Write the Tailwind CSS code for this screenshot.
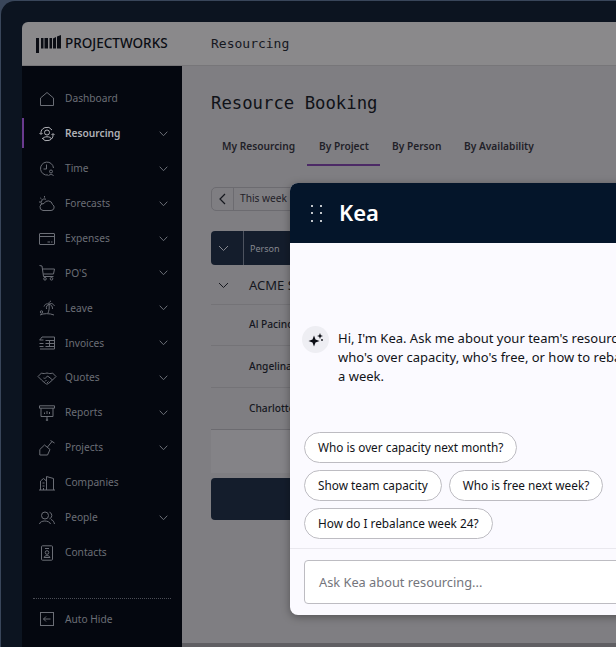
<!DOCTYPE html>
<html lang="en">
<head>
    <meta charset="UTF-8">
    <meta name="viewport" content="width=device-width, initial-scale=1.0">
    <title>Projectworks - Kea</title>
    <script src="https://cdn.jsdelivr.net/npm/@tailwindcss/browser@4"></script>
</head>
<body class="bg-[#39465a] font-['Noto_Sans',sans-serif]">
<div class="relative w-[616px] h-[647px] overflow-hidden">
    <!-- device frame -->
    <div class="absolute inset-0 ml-px mt-px rounded-tl-[14px] bg-[#0c1420] pl-[21px] pt-[21px]">
        <div class="flex flex-col w-[700px] h-[625px] rounded-tl-[6px] overflow-hidden">
            <header class="flex items-center h-[44px] shrink-0 bg-[#8a898b] border-b border-[#777679]">
                <div class="flex items-center w-[189px] pl-[14px] gap-[4px]">
                    <svg width="25" height="18" viewBox="0 0 25 18" fill="#0b0d14"><path d="M0 3h3v15H0zM5 3h2.500v10.500H5zM8.500 3H12v10.500H8.500zM13.500 3H16v10.500h-2.500zM17 3.500l3-1.500v11.500h-3zM21 1.500 25 0v13.500h-4z"/></svg>
                    <span class="text-[13.5px] leading-none font-medium text-[#0b0d14]">PROJECTWORKS</span>
                </div>
                <span class="font-['DejaVu_Sans_Mono',monospace] text-[13px] text-[#16181f]">Resourcing</span>
            </header>
            <div class="flex flex-1 min-h-0">
                <nav class="w-[160px] shrink-0 bg-[#04070f] pt-[15.5px] relative text-[10.2px] text-[#6b6e76]">
                    <div class="absolute left-0 top-[52px] w-[2px] h-[30px] bg-[#6a3a8e]"></div>
                    <div class="flex items-center h-[34.9px] pl-[17px] gap-[10px]">
                        <svg class="w-[16px] h-[16px]" viewBox="0 0 16 16" fill="none" stroke="currentColor"><path d="M1.500 7 8 1.500 14.500 7v7.500h-13z"/></svg><span>Dashboard</span>
                    </div>
                    <div class="flex items-center h-[34.9px] pl-[17px] gap-[10px] text-[#b0b1b6] font-semibold">
                        <svg class="w-[16px] h-[16px]" viewBox="0 0 16 16" fill="none" stroke="currentColor"><circle cx="8" cy="6.500" r="2.500"/><path d="M3.500 13c1-3 8-3 9 0M2 8a6 6 0 0 1 11-4M14 8a6 6 0 0 1-11 4M.5 7l1.500 1.500L3.500 7M12.500 9l1.500-1.500L15.500 9"/></svg><span class="flex-1">Resourcing</span>
                        <svg class="w-[9px] h-[6px] mr-[14px]" viewBox="0 0 9 6" fill="none" stroke="#6b6e76"><path d="m.7.7 3.800 4 3.800-4"/></svg>
                    </div>
                    <div class="flex items-center h-[34.9px] pl-[17px] gap-[10px]">
                        <svg class="w-[16px] h-[16px]" viewBox="0 0 16 16" fill="none" stroke="currentColor"><path d="M9 14A6.500 6.500 0 1 1 14.500 7M7.500 3.500V8H4.500"/><circle cx="12" cy="10.500" r="1.500"/><path d="M9.500 15c.5-2 4.500-2 5 0"/></svg><span class="flex-1">Time</span>
                        <svg class="w-[9px] h-[6px] mr-[14px]" viewBox="0 0 9 6" fill="none" stroke="currentColor"><path d="m.7.7 3.800 4 3.800-4"/></svg>
                    </div>
                    <div class="flex items-center h-[34.9px] pl-[17px] gap-[10px]">
                        <svg class="w-[16px] h-[16px]" viewBox="0 0 16 16" fill="none" stroke="currentColor"><path d="M4 14.500h8a3.200 3.200 0 0 0 1.500-6A4.500 4.500 0 0 0 5 7.500a3.500 3.500 0 0 0-1 7zM2.800 8.500A3.500 3.500 0 0 1 7 3.200M0 6h1.800M1.200 1.800l1.400 1.400M5.500 0v1.600"/></svg><span class="flex-1">Forecasts</span>
                        <svg class="w-[9px] h-[6px] mr-[14px]" viewBox="0 0 9 6" fill="none" stroke="currentColor"><path d="m.7.7 3.800 4 3.800-4"/></svg>
                    </div>
                    <div class="flex items-center h-[34.9px] pl-[17px] gap-[10px]">
                        <svg class="w-[16px] h-[16px]" viewBox="0 0 16 16" fill="none" stroke="currentColor"><rect x=".5" y="2.500" width="15" height="11" rx=".5"/><path d="M.5 5.500h15M8.500 11h2.500M12 11h1.500"/></svg><span class="flex-1">Expenses</span>
                        <svg class="w-[9px] h-[6px] mr-[14px]" viewBox="0 0 9 6" fill="none" stroke="currentColor"><path d="m.7.7 3.800 4 3.800-4"/></svg>
                    </div>
                    <div class="flex items-center h-[34.9px] pl-[17px] gap-[10px]">
                        <svg class="w-[16px] h-[16px]" viewBox="0 0 16 16" fill="none" stroke="currentColor"><path d="M.5.500 3 1l1.500 10.500h10M3.500 4H15.500l-1 5H4.300"/><circle cx="6" cy="13.800" r="1.300"/><circle cx="12.500" cy="13.800" r="1.300"/></svg><span class="flex-1">PO'S</span>
                        <svg class="w-[9px] h-[6px] mr-[14px]" viewBox="0 0 9 6" fill="none" stroke="currentColor"><path d="m.7.7 3.800 4 3.800-4"/></svg>
                    </div>
                    <div class="flex items-center h-[34.9px] pl-[17px] gap-[10px]">
                        <svg class="w-[16px] h-[16px]" viewBox="0 0 16 16" fill="none" stroke="currentColor"><path d="M10 4.500c.5 3.500 0 6.500-1 8.500M10 4.500C8 3 6 4 5 6.500M10 4.500c2-1.800 4-1 5.500 1.500M10 4.500c2 0 3.700 1.500 3.500 4.500M10 4.500C8 5 7 6.500 7.500 9M10 4.500C9.500 3 10.500 1.500 12 1M1 15c3-1.800 10-1.800 14 0"/><circle cx="2.500" cy="12" r="1.200"/></svg><span class="flex-1">Leave</span>
                        <svg class="w-[9px] h-[6px] mr-[14px]" viewBox="0 0 9 6" fill="none" stroke="currentColor"><path d="m.7.7 3.800 4 3.800-4"/></svg>
                    </div>
                    <div class="flex items-center h-[34.9px] pl-[17px] gap-[10px]">
                        <svg class="w-[16px] h-[16px]" viewBox="0 0 16 16" fill="none" stroke="currentColor"><path d="M3 2h12.500v12H1M.5 5H4.500M.5 8.500h4M.5 11.500h4M3 2 .8 5M6.500 5.500h9M6.500 8.500h9M6.500 11.500h9M10.500 5.500v6"/></svg><span class="flex-1">Invoices</span>
                        <svg class="w-[9px] h-[6px] mr-[14px]" viewBox="0 0 9 6" fill="none" stroke="currentColor"><path d="m.7.7 3.800 4 3.800-4"/></svg>
                    </div>
                    <div class="flex items-center h-[34.9px] pl-[17px] gap-[10px]">
                        <svg class="w-[16px] h-[16px] overflow-visible" viewBox="0 0 16 16" fill="none" stroke="currentColor"><path d="M-1 6.500 2.500 3c2 1 3.500.5 5.500 0 2 .5 3.500 1 5.500 0L17 6.500l-3.500 3.500-4 3.500c-1 .8-2 .8-3 0l-4-3.500zM4.500 8c1.500 1 3-.5 4-2 1.500 1 3.500 2.500 5 4M6 11.500l1.500-1.500M8 13l1.500-1.500"/></svg><span class="flex-1">Quotes</span>
                        <svg class="w-[9px] h-[6px] mr-[14px]" viewBox="0 0 9 6" fill="none" stroke="currentColor"><path d="m.7.7 3.800 4 3.800-4"/></svg>
                    </div>
                    <div class="flex items-center h-[34.9px] pl-[17px] gap-[10px]">
                        <svg class="w-[16px] h-[16px]" viewBox="0 0 16 16" fill="none" stroke="currentColor"><path d="M.5.800h15v2.400H.5zM2 3.200v8.300h12V3.200M8 11.500V14M5.500 9V7.500M8 9V6M10.500 9V7"/><circle cx="8" cy="15" r=".8"/></svg><span class="flex-1">Reports</span>
                        <svg class="w-[9px] h-[6px] mr-[14px]" viewBox="0 0 9 6" fill="none" stroke="currentColor"><path d="m.7.7 3.800 4 3.800-4"/></svg>
                    </div>
                    <div class="flex items-center h-[34.9px] pl-[17px] gap-[10px]">
                        <svg class="w-[16px] h-[16px]" viewBox="0 0 16 16" fill="none" stroke="currentColor"><path d="M.8 9.500 5.500 5l5.500 4.500L8.500 15H.8zM8.500 7l4.500-5.500M11.500.5l4 2.500"/></svg><span class="flex-1">Projects</span>
                        <svg class="w-[9px] h-[6px] mr-[14px]" viewBox="0 0 9 6" fill="none" stroke="currentColor"><path d="m.7.7 3.800 4 3.800-4"/></svg>
                    </div>
                    <div class="flex items-center h-[34.9px] pl-[17px] gap-[10px]">
                        <svg class="w-[16px] h-[16px]" viewBox="0 0 16 16" fill="none" stroke="currentColor"><path d="M0 15h16M1.500 15V6L4.500 3.500 7.500 6v9M7.500 15V1.500l7 2V15M3.500 8h2M3.500 11h2M4.500 15v-2"/></svg><span>Companies</span>
                    </div>
                    <div class="flex items-center h-[34.9px] pl-[17px] gap-[10px]">
                        <svg class="w-[16px] h-[16px]" viewBox="0 0 16 16" fill="none" stroke="currentColor"><circle cx="6" cy="5.500" r="3.500"/><path d="M.5 14c.5-4 10-4 11 0M10.500 2.200a3.500 3.500 0 0 1 0 6.600M12 9.500c2 .5 3 2.500 3.500 4.500"/></svg><span class="flex-1">People</span>
                        <svg class="w-[9px] h-[6px] mr-[14px]" viewBox="0 0 9 6" fill="none" stroke="currentColor"><path d="m.7.7 3.800 4 3.800-4"/></svg>
                    </div>
                    <div class="flex items-center h-[34.9px] pl-[17px] gap-[10px]">
                        <svg class="w-[16px] h-[16px]" viewBox="0 0 16 16" fill="none" stroke="currentColor"><rect x="2.500" y=".8" width="11" height="14.400" rx="1"/><path d="M6 3.500h4"/><circle cx="8" cy="7.500" r="1.800"/><path d="M5 12.500c.5-2.500 5.500-2.500 6 0z"/></svg><span>Contacts</span>
                    </div>
                    <div class="mx-[11px] mt-[28px] border-t border-dotted border-[#4b4d55]"></div>
                    <div class="flex items-center h-[34.9px] mt-[3px] pl-[17px] gap-[10px]">
                        <svg class="w-[16px] h-[16px]" viewBox="0 0 16 16" fill="none" stroke="currentColor"><rect x="1.500" y="1.500" width="13" height="13"/><path d="M11.500 8h-7M7 5.500 4.500 8 7 10.500"/></svg><span>Auto Hide</span>
                    </div>
                </nav>
                <main class="flex flex-col flex-1 bg-[#7f7e82] pl-[29px] pt-[25px]">
                    <h1 class="font-['DejaVu_Sans_Mono',monospace] text-[17.3px] leading-[24px] text-[#101218]">Resource Booking</h1>
                    <div class="flex mt-[19px] text-[10.2px] font-semibold text-[#1f2128]">
                        <div class="w-[96px] pl-[11px] h-[32px] leading-[24px]">My Resourcing</div>
                        <div class="w-[73px] pl-[12px] h-[32px] leading-[24px] border-b-2 border-[#4c2a66]">By Project</div>
                        <div class="w-[72px] pl-[12px] h-[32px] leading-[24px]">By Person</div>
                        <div class="pl-[12px] h-[32px] leading-[24px]">By Availability</div>
                    </div>
                    <div class="flex items-center w-[120px] h-[24px] mt-[21px] rounded-[5px] border border-[#6c6b70] text-[10.2px] text-[#1f2128]">
                        <div class="flex items-center justify-center w-[22px] h-full border-r border-[#6c6b70]">
                            <svg width="7" height="12" viewBox="0 0 7 12" fill="none" stroke="#15171e" stroke-width="1.200"><path d="M6 1 1 6l5 5"/></svg>
                        </div>
                        <span class="pl-[6px]">This week</span>
                    </div>
                    <div class="flex items-center w-[100px] h-[34px] mt-[20px] bg-[#141d2c] rounded-l-[4px] text-[9px] text-[#85878e]">
                        <div class="flex items-center w-[33px] h-full pl-[7px] border-r border-[#4d535f]">
                            <svg width="11" height="7" viewBox="0 0 11 7" fill="none" stroke="#85878e"><path d="m1 1 4.500 4.500L10 1"/></svg>
                        </div>
                        <span class="pl-[6px] pt-[1px]">Person</span>
                    </div>
                    <div class="w-[100px] border-b border-[#747377] h-[40px] pt-[2px] flex items-center">
                        <svg class="ml-[7px] shrink-0" width="11" height="7" viewBox="0 0 11 7" fill="none" stroke="#15171e"><path d="m1 1 4.500 4.500L10 1"/></svg>
                        <span class="ml-[20px] text-[13px] text-[#15171e] whitespace-nowrap">ACME Software</span>
                    </div>
                    <div class="w-[100px] h-[41px] shrink-0 pl-[38px] flex items-center border-b border-[#747377] text-[10.2px] font-medium text-[#15171e] whitespace-nowrap">Al Pacino</div>
                    <div class="w-[100px] h-[42px] shrink-0 pl-[38px] flex items-center border-b border-[#747377] text-[10.2px] font-medium text-[#15171e] whitespace-nowrap">Angelina Jolie</div>
                    <div class="w-[100px] h-[42px] shrink-0 pl-[38px] flex items-center border-b border-[#6c6b70] text-[10.2px] font-medium text-[#15171e] whitespace-nowrap">Charlotte Rae</div>
                    <div class="w-[100px] h-[43px] shrink-0 bg-[#848387]"></div>
                    <div class="w-[100px] h-[42px] shrink-0 mt-[5px] bg-[#141d2c] rounded-[4px]"></div>
                    <div class="mt-auto h-[4px] -ml-[29px] bg-[#605f63]"></div>
                </main>
            </div>
        </div>
    </div>

    <!-- Kea chat panel sits over the page -->
    <div class="absolute left-[290px] top-[183px] w-[420px] h-[432px] flex flex-col rounded-[8px] overflow-hidden bg-[#fbfaff] shadow-[0_2px_8px_rgba(0,0,0,0.35)]">
        <div class="flex items-center h-[60px] shrink-0 bg-[#04152a] pl-[21px]">
            <div class="grid grid-cols-2 gap-x-[7px] gap-y-[5.5px]">
                <span class="w-[2px] h-[2px] rounded-full bg-white"></span><span class="w-[2px] h-[2px] rounded-full bg-white"></span>
                <span class="w-[2px] h-[2px] rounded-full bg-white"></span><span class="w-[2px] h-[2px] rounded-full bg-white"></span>
                <span class="w-[2px] h-[2px] rounded-full bg-white"></span><span class="w-[2px] h-[2px] rounded-full bg-white"></span>
            </div>
            <span class="ml-[17px] -mt-[1px] text-[22px] font-semibold text-white">Kea</span>
        </div>
        <div class="flex items-start gap-[9px] pl-[12px] pt-[83px] h-[189px] shrink-0">
            <div class="flex items-center justify-center w-[27px] h-[27px] rounded-full bg-[#eeeef3] shrink-0">
                <svg width="16" height="16" viewBox="0 0 16 16" fill="#0b0d14"><path d="M6 3.500 7.500 7.500 11.500 9 7.500 10.500 6 14.500 4.500 10.500.5 9 4.500 7.500z"/><path d="M12 1l.8 2.200L15 4l-2.200.8L12 7l-.8-2.200L9 4l2.200-.8z"/><circle cx="14" cy="8" r=".9"/></svg>
            </div>
            <p class="mt-[3px] text-[13px] leading-[19px] text-[#111318] whitespace-nowrap">Hi, I'm Kea. Ask me about your team's resourcing:<br>who's over capacity, who's free, or how to rebalance<br>a week.</p>
        </div>
        <div class="flex flex-col items-start gap-[7px] pl-[14px] text-[11.8px] text-[#111318]">
            <button class="h-[31px] px-[13px] rounded-full bg-white border border-[#bdbcc2]">Who is over capacity next month?</button>
            <div class="flex gap-[7px]">
                <button class="h-[31px] px-[13px] rounded-full bg-white border border-[#bdbcc2]">Show team capacity</button>
                <button class="h-[31px] px-[13px] rounded-full bg-white border border-[#bdbcc2]">Who is free next week?</button>
            </div>
            <button class="h-[31px] px-[13px] rounded-full bg-white border border-[#bdbcc2]">How do I rebalance week 24?</button>
        </div>
        <div class="mt-[9px] pt-[11px] pl-[14px] border-t border-[#e9e8ee]">
            <div class="flex items-center h-[44px] pl-[14px] pt-[1px] rounded-[4px] bg-white border border-[#bdbcc2] text-[12.8px] text-[#74757c]">Ask Kea about resourcing...</div>
        </div>
    </div>
</div>
</body>
</html>
